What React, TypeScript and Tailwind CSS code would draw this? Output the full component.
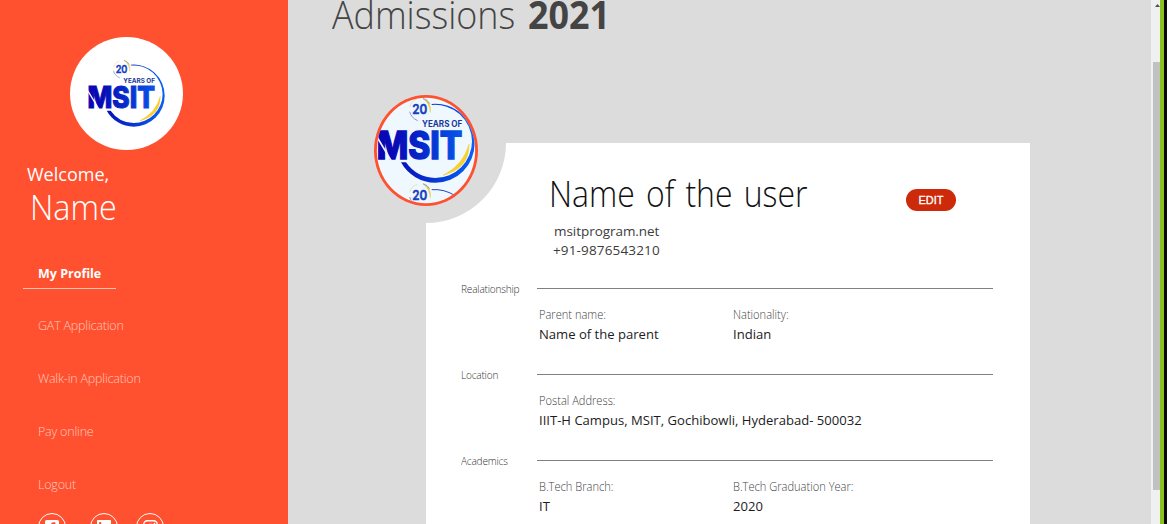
import { useId } from "react";
import { FaFacebookSquare, FaInstagram, FaLinkedin } from "react-icons/fa";

function LogoMark({ paper }: { paper: string }) {
  const id = useId();
  const blue = `url(#${id})`;
  return (
    <>
      <defs>
        <linearGradient id={id} gradientUnits="userSpaceOnUse" x1="40" y1="0" x2="330" y2="0">
          <stop offset="0.15" stopColor="#0808b4" />
          <stop offset="0.55" stopColor="#0634d2" />
          <stop offset="1" stopColor="#0a62f5" />
        </linearGradient>
      </defs>
      <path
        d="M108 232 A118 118 0 0 0 211 293 A118 118 0 0 0 329 175 A118 118 0 0 0 200 57 L200 60 A110.5 110.5 0 0 1 321 168.5 A110.5 110.5 0 0 1 210.5 279 A110.5 110.5 0 0 1 123 232Z"
        fill={blue}
      />
      <path d="M312 178 Q313 250 234 271 Q295 240 312 178Z" fill="#f7cf2e" stroke="#f7cf2e" strokeWidth="2" />
      <text x="35" y="222" fontSize="114" fontWeight="800" textLength="257" lengthAdjust="spacingAndGlyphs" fill={blue} stroke={blue} strokeWidth="4" fontFamily="Inter, sans-serif">MSIT</text>
      <path d="M36 156 L78 226" stroke={paper} strokeWidth="5" />
      <text x="171" y="127" fontSize="25" fontWeight="700" textLength="121" lengthAdjust="spacingAndGlyphs" fill="#173a9c" fontFamily="Inter, sans-serif">YEARS OF</text>
      <Twenty />
    </>
  );
}

function Twenty() {
  return (
    <>
      <text x="142" y="88" fontSize="40" fontWeight="600" textLength="45" lengthAdjust="spacingAndGlyphs" fill="#1540c0" stroke="#1540c0" strokeWidth="1.5" fontFamily="Inter, sans-serif">20</text>
      <path d="M134 66 A34 34 0 0 1 156 42" stroke="#e8d68a" strokeWidth="2" fill="none" />
      <path d="M134 80 Q138 98 158 107" stroke="#8d96c4" strokeWidth="3" fill="none" />
      <path d="M174 41 Q200 50 196 82 Q194 54 174 41Z" fill="#f0cb45" stroke="#f0cb45" strokeWidth="1.5" />
      <path d="M174 40 Q187 43 194 56" stroke="#3b58b0" strokeWidth="1.5" fill="none" />
    </>
  );
}

const links = ["GAT Application", "Walk-in Application", "Pay online", "Logout"];

function Sidebar() {
  return (
    <aside className="flex h-full w-[288px] shrink-0 flex-col overflow-hidden bg-[#ff512f] pt-[37px] text-white">
      <div className="ml-[70px] size-[113px] shrink-0 overflow-hidden rounded-full bg-white">
        <svg viewBox="30 21 339 339" className="size-full">
          <g transform="translate(85 168) scale(0.7874) translate(-38 -138)">
            <LogoMark paper="#ffffff" />
          </g>
        </svg>
      </div>
      <div className="mt-[11px] ml-[27px] h-[26px] shrink-0 text-[18px] leading-[26px]">Welcome,</div>
      <div className="mt-[2px] ml-[30px] h-[36px] shrink-0 origin-left scale-x-[0.95] text-[34px] leading-[36px] font-light">Name</div>
      <div className="mt-[36px] ml-[23px] flex h-[28px] w-[93px] shrink-0 border-b border-[#ffc0b0] pl-[15px] text-[12.5px] leading-[25px] font-bold">
        <span className="whitespace-nowrap">My Profile</span>
      </div>
      <nav className="mt-[10px] ml-[38px] flex shrink-0 flex-col font-light text-[#ffc8bc]">
        {links.map((l) => (
          <a key={l} className="h-[53px] text-[12.5px] leading-[53px] tracking-[-0.2px] whitespace-nowrap">{l}</a>
        ))}
      </nav>
      <div className="mt-[2px] ml-[38px] flex shrink-0">
        <span className="flex size-[28px] items-center justify-center rounded-full border-[1.5px] border-white"><FaFacebookSquare size={16} /></span>
        <span className="ml-[24px] flex size-[28px] items-center justify-center rounded-full border-[1.5px] border-white"><FaLinkedin size={16} /></span>
        <span className="ml-[18px] flex size-[28px] items-center justify-center rounded-full border-[1.5px] border-white"><FaInstagram size={17} /></span>
      </div>
    </aside>
  );
}

interface Field { label: string; value: string }

function Section({ title, fields }: { title: string; fields: Field[] }) {
  return (
    <section className="flex h-[86px] shrink-0">
      <h2 className="w-[76px] shrink-0 origin-left scale-x-[0.96] text-[10.5px] leading-[20px] font-light tracking-[-0.2px] text-[#333]">{title}</h2>
      <div className="mt-[9px] w-[456px] border-t border-[#808080]">
        <div className="flex pt-[16px] pl-[2px] whitespace-nowrap">
          {fields.map((f) => (
            <div key={f.label} className="w-[194px]">
              <div className="h-[19px] origin-left scale-x-[0.925] text-[12px] leading-[20px] font-light text-[#444]">{f.label}</div>
              <div className="h-[20px] origin-left scale-x-[0.968] text-[13.5px] leading-[20px] text-[#1c1c1c]">{f.value}</div>
            </div>
          ))}
        </div>
      </div>
    </section>
  );
}

function ProfileCard() {
  return (
    <div className="relative ml-[138px] h-[381px] w-[604px] shrink-0 bg-white">
      <div className="absolute top-0 left-0 h-[80px] w-[80px] rounded-br-full bg-[#dcdcdc]" />
      <svg viewBox="27 30 312 333" className="absolute -top-[48px] -left-[52px] h-[111px] w-[104px]">
        <defs>
          <clipPath id="avatar-shape"><ellipse cx="183" cy="196.5" rx="147.5" ry="158" /></clipPath>
        </defs>
        <ellipse cx="183" cy="196.5" rx="156" ry="166.5" fill="#ff512f" />
        <g clipPath="url(#avatar-shape)">
          <rect x="27" y="30" width="312" height="333" fill="#f0f8ff" />
          <LogoMark paper="#f0f8ff" />
          <g transform="translate(0 256)">
            <Twenty />
            <path d="M200 58 Q238 55 272 77" stroke="#2444b8" strokeWidth="3" fill="none" />
          </g>
        </g>
      </svg>
      <div className="flex h-[136px] pt-[28px]">
        <div className="ml-[122px] w-[358px] whitespace-nowrap">
          <h1 className="ml-[1px] h-[46px] origin-left scale-x-[0.888] text-[36px] leading-[46px] font-light [word-spacing:3.2px] text-[#111]">Name of the user</h1>
          <div className="mt-[5px] ml-[6px] h-[19px] text-[13.5px] leading-[19px] tracking-[-0.05px] text-[#3c3c3c]">msitprogram.net</div>
          <div className="ml-[5px] h-[19px] text-[13.5px] leading-[19px] tracking-[0.15px] text-[#3c3c3c]">+91-9876543210</div>
        </div>
        <button className="mt-[18px] flex h-[22px] w-[50px] items-center justify-center rounded-full bg-[#cc2a0b] pt-px font-['Liberation_Sans',sans-serif] text-[11px] font-medium text-white [-webkit-text-stroke:0.3px_white]">EDIT</button>
      </div>
      <div className="flex flex-col pl-[35px]">
        <Section title="Realationship" fields={[
          { label: "Parent name:", value: "Name of the parent" },
          { label: "Nationality:", value: "Indian" },
        ]} />
        <Section title="Location" fields={[
          { label: "Postal Address:", value: "IIIT-H Campus, MSIT, Gochibowli, Hyderabad- 500032" },
        ]} />
        <Section title="Academics" fields={[
          { label: "B.Tech Branch:", value: "IT" },
          { label: "B.Tech Graduation Year:", value: "2020" },
        ]} />
      </div>
    </div>
  );
}

export default function App() {
  return (
    <div className="flex h-[524px] w-[1167px] overflow-hidden bg-[#dcdcdc] font-['Open_Sans','Noto_Sans',sans-serif]">
      <Sidebar />
      <main className="flex h-full w-[863px] shrink-0 flex-col overflow-hidden">
        <div className="flex h-[143px] shrink-0 pl-[44px] text-[39px] leading-[28px] whitespace-nowrap text-[#444]">
          <span className="w-[196px] shrink-0 origin-left scale-x-[0.92] font-light">Admissions</span>
          <span className="origin-left scale-x-[0.92] font-bold">2021</span>
        </div>
        <ProfileCard />
      </main>
      <div className="flex w-[9px] shrink-0 flex-col bg-[#f0f0f0]">
        <div className="flex h-[62px] justify-end pt-[4px]">
          <svg className="h-[3px] w-[5px]" viewBox="0 0 5 3"><path d="M0 3 L2.5 0 L5 3Z" fill="#505050" /></svg>
        </div>
        <div className="ml-[2px] h-[428px] bg-[#c1c1c1]" />
      </div>
      <div className="w-[4px] shrink-0 bg-[#8cc220]" />
      <div className="w-[3px] shrink-0 bg-[#0a0a0a]" />
    </div>
  );
}
